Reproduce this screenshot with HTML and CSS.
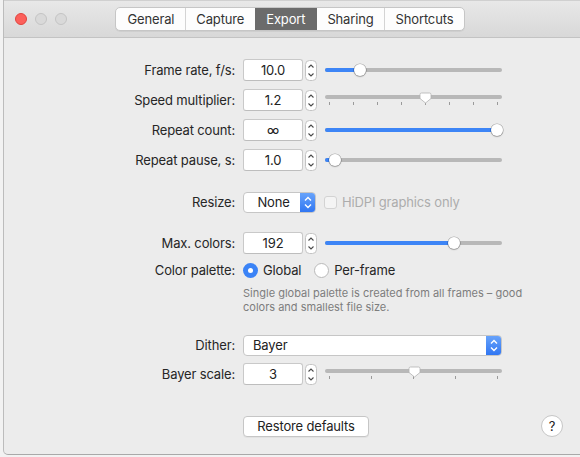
FILE: index.html
```html
<!DOCTYPE html>
<html>
<head>
<meta charset="utf-8">
<link rel="stylesheet" href="styles.css">
</head>
<body>
<div class="window">
  <div class="titlebar">
    <div class="lights">
      <span class="light red"></span>
      <span class="light"></span>
      <span class="light"></span>
    </div>
    <div class="tabs">
      <span class="tab">General</span>
      <span class="tab">Capture</span>
      <span class="tab active">Export</span>
      <span class="tab">Sharing</span>
      <span class="tab">Shortcuts</span>
    </div>
  </div>

  <div class="form">
    <div class="row">
      <label class="label">Frame rate, f/s:</label>
      <div class="ctl">
        <span class="field">10.0</span>
        <svg class="stepper" width="12" height="21" viewBox="0 0 12 21"><rect x="0.5" y="0.5" width="11" height="20" rx="4" fill="#fff" stroke="#c4c4c4"/><polyline points="3.5,7.5 6,5 8.5,7.5" fill="none" stroke="#4a4a4a" stroke-width="1.1"/><polyline points="3.5,13.5 6,16 8.5,13.5" fill="none" stroke="#4a4a4a" stroke-width="1.1"/></svg>
        <div class="slider"><div class="track"><div class="fill" style="width:35px"></div></div><span class="knob" style="left:35px"></span></div>
      </div>
    </div>

    <div class="row gap8">
      <label class="label">Speed multiplier:</label>
      <div class="ctl">
        <span class="field">1.2</span>
        <svg class="stepper" width="12" height="21" viewBox="0 0 12 21"><rect x="0.5" y="0.5" width="11" height="20" rx="4" fill="#fff" stroke="#c4c4c4"/><polyline points="3.5,7.5 6,5 8.5,7.5" fill="none" stroke="#4a4a4a" stroke-width="1.1"/><polyline points="3.5,13.5 6,16 8.5,13.5" fill="none" stroke="#4a4a4a" stroke-width="1.1"/></svg>
        <div class="slider ticked">
          <div class="track"></div>
          <div class="ticks"><i></i><i></i><i></i><i></i><i></i><i></i><i></i><i></i></div>
          <svg class="tknob" style="left:100px" width="13" height="12" viewBox="0 0 13 12"><path d="M1 2.5 Q1 1 2.5 1 H10.5 Q12 1 12 2.5 V6.5 L6.5 11 L1 6.5 Z" fill="#fff" stroke="#b3b3b3" stroke-width="0.8"/></svg>
        </div>
      </div>
    </div>

    <div class="row gap8">
      <label class="label">Repeat count:</label>
      <div class="ctl">
        <span class="field">∞</span>
        <svg class="stepper" width="12" height="21" viewBox="0 0 12 21"><rect x="0.5" y="0.5" width="11" height="20" rx="4" fill="#fff" stroke="#c4c4c4"/><polyline points="3.5,7.5 6,5 8.5,7.5" fill="none" stroke="#4a4a4a" stroke-width="1.1"/><polyline points="3.5,13.5 6,16 8.5,13.5" fill="none" stroke="#4a4a4a" stroke-width="1.1"/></svg>
        <div class="slider"><div class="track"><div class="fill" style="width:173px"></div></div><span class="knob" style="left:172px"></span></div>
      </div>
    </div>

    <div class="row gap8">
      <label class="label">Repeat pause, s:</label>
      <div class="ctl">
        <span class="field">1.0</span>
        <svg class="stepper" width="12" height="21" viewBox="0 0 12 21"><rect x="0.5" y="0.5" width="11" height="20" rx="4" fill="#fff" stroke="#c4c4c4"/><polyline points="3.5,7.5 6,5 8.5,7.5" fill="none" stroke="#4a4a4a" stroke-width="1.1"/><polyline points="3.5,13.5 6,16 8.5,13.5" fill="none" stroke="#4a4a4a" stroke-width="1.1"/></svg>
        <div class="slider"><div class="track"><div class="fill" style="width:10px"></div></div><span class="knob" style="left:10px"></span></div>
      </div>
    </div>

    <div class="row gap20">
      <label class="label">Resize:</label>
      <div class="ctl">
        <div class="popup small">
          <span class="popup-text center">None</span>
          <span class="popup-arrow"><svg width="16" height="21" viewBox="0 0 16 21"><polyline points="5,8.5 8,5.5 11,8.5" fill="none" stroke="#fff" stroke-width="1.4"/><polyline points="5,12.5 8,15.5 11,12.5" fill="none" stroke="#fff" stroke-width="1.4"/></svg></span>
        </div>
        <span class="checkbox"></span>
        <span class="disabled-text">HiDPI graphics only</span>
      </div>
    </div>

    <div class="row gap19">
      <label class="label">Max. colors:</label>
      <div class="ctl">
        <span class="field">192</span>
        <svg class="stepper" width="12" height="21" viewBox="0 0 12 21"><rect x="0.5" y="0.5" width="11" height="20" rx="4" fill="#fff" stroke="#c4c4c4"/><polyline points="3.5,7.5 6,5 8.5,7.5" fill="none" stroke="#4a4a4a" stroke-width="1.1"/><polyline points="3.5,13.5 6,16 8.5,13.5" fill="none" stroke="#4a4a4a" stroke-width="1.1"/></svg>
        <div class="slider"><div class="track"><div class="fill" style="width:129px"></div></div><span class="knob" style="left:129px"></span></div>
      </div>
    </div>

    <div class="row gap5">
      <label class="label">Color palette:</label>
      <div class="ctl">
        <span class="radio on"></span><span class="radio-text">Global</span>
        <span class="radio off"></span><span class="radio-text">Per-frame</span>
      </div>
    </div>

    <div class="row gap5 auto">
      <span></span>
      <p class="hint">Single global palette is created from all frames – good<br>colors and smallest file size.</p>
    </div>

    <div class="row gap20">
      <label class="label">Dither:</label>
      <div class="ctl">
        <div class="popup wide">
          <span class="popup-text">Bayer</span>
          <span class="popup-arrow"><svg width="16" height="21" viewBox="0 0 16 21"><polyline points="5,8.5 8,5.5 11,8.5" fill="none" stroke="#fff" stroke-width="1.4"/><polyline points="5,12.5 8,15.5 11,12.5" fill="none" stroke="#fff" stroke-width="1.4"/></svg></span>
        </div>
      </div>
    </div>

    <div class="row gap7">
      <label class="label">Bayer scale:</label>
      <div class="ctl">
        <span class="field">3</span>
        <svg class="stepper" width="12" height="21" viewBox="0 0 12 21"><rect x="0.5" y="0.5" width="11" height="20" rx="4" fill="#fff" stroke="#c4c4c4"/><polyline points="3.5,7.5 6,5 8.5,7.5" fill="none" stroke="#4a4a4a" stroke-width="1.1"/><polyline points="3.5,13.5 6,16 8.5,13.5" fill="none" stroke="#4a4a4a" stroke-width="1.1"/></svg>
        <div class="slider ticked">
          <div class="track"></div>
          <div class="ticks"><i></i><i></i><i></i><i></i><i></i></div>
          <svg class="tknob" style="left:89px" width="13" height="12" viewBox="0 0 13 12"><path d="M1 2.5 Q1 1 2.5 1 H10.5 Q12 1 12 2.5 V6.5 L6.5 11 L1 6.5 Z" fill="#fff" stroke="#b3b3b3" stroke-width="0.8"/></svg>
        </div>
      </div>
    </div>

    <div class="bottom">
      <button class="btn">Restore defaults</button>
      <button class="help">?</button>
    </div>
  </div>
</div>
</body>
</html>
```

FILE: styles.css
```css
* { box-sizing: border-box; }
html, body {
  margin: 0;
  padding: 0;
}
body {
  width: 580px;
  height: 457px;
  overflow: hidden;
  background: #f2f2f2;
  font-family: Inter, "Noto Sans", "Liberation Sans", sans-serif;
  font-size: 13px;
  letter-spacing: -0.15px;
  color: #262626;
}
.window {
  margin-left: 3px;
  width: 577px;
  height: 455px;
  background: #ececec;
  border-left: 1px solid #bcbcbc;
  border-bottom: 1px solid #a9a9a9;
  border-bottom-left-radius: 5px;
  display: flex;
  flex-direction: column;
  overflow: hidden;
}
.titlebar {
  height: 38px;
  flex: none;
  display: flex;
  align-items: center;
  background: linear-gradient(#e8e8e8, #d8d8d8);
  border-bottom: 1px solid #c3c3c3;
  border-top: 1px solid #d0d0d0;
}
.lights {
  display: flex;
  gap: 8px;
  padding-left: 11px;
}
.light {
  width: 12px;
  height: 12px;
  border-radius: 50%;
  background: #d9d9d9;
  border: 1px solid #c4c4c4;
}
.light.red {
  background: #fc605b;
  border-color: #e0443e;
}
.tabs {
  margin-left: 48px;
  display: flex;
  height: 24px;
  border: 1px solid #c6c6c6;
  border-radius: 5px;
  background: #fdfdfd;
  overflow: hidden;
  box-shadow: 0 1px 0 rgba(0,0,0,0.05);
}
.tab {
  display: flex;
  align-items: center;
  padding: 0 10.5px;
  color: #333;
  border-left: 1px solid #d4d4d4;
}
.tab:first-child { border-left: none; padding-left: 11.5px; }
.tab.active {
  background: #6b6b6b;
  color: #fff;
  border-left-color: #6b6b6b;
}
.tab.active + .tab { border-left-color: #6b6b6b; }

.form {
  padding-top: 21px;
  display: flex;
  flex-direction: column;
}
.row {
  display: grid;
  grid-template-columns: 231px 1fr;
  column-gap: 8px;
  align-items: center;
  height: 22px;
}
.row.auto { height: auto; }
.gap5 { margin-top: 5px; }
.gap7 { margin-top: 7px; }
.gap8 { margin-top: 8px; }
.gap19 { margin-top: 19px; }
.gap20 { margin-top: 20px; }
.label {
  text-align: right;
  white-space: nowrap;
}
.ctl {
  display: flex;
  align-items: center;
  height: 22px;
}
.field {
  width: 60px;
  height: 22px;
  background: #fff;
  border: 1px solid #c9c9c9;
  border-bottom-color: #bdbdbd;
  border-radius: 3px;
  display: flex;
  align-items: center;
  justify-content: center;
  color: #222;
}
.stepper {
  margin-left: 2px;
  flex: none;
}
.slider {
  position: relative;
  margin-left: 8px;
  width: 177px;
  height: 22px;
  display: flex;
  align-items: center;
}
.track {
  flex: 1;
  height: 4px;
  background: #b8b8b8;
  border-radius: 2px;
  overflow: hidden;
}
.fill {
  height: 100%;
  background: #3d85f6;
}
.knob {
  position: absolute;
  top: 50%;
  width: 12px;
  height: 12px;
  margin: -6px 0 0 -6px;
  border-radius: 50%;
  background: #fff;
  box-shadow: 0 0 0 0.6px rgba(0,0,0,0.28), 0 1px 1.5px rgba(0,0,0,0.2);
}
.slider.ticked {
  display: block;
}
.slider.ticked .track {
  position: absolute;
  left: 0;
  right: 0;
  top: 6px;
}
.ticks {
  position: absolute;
  left: 4px;
  right: 4px;
  top: 13px;
  display: flex;
  justify-content: space-between;
}
.ticks i {
  width: 1px;
  height: 3px;
  background: #9a9a9a;
}
.tknob {
  position: absolute;
  top: 3px;
  margin-left: -6.5px;
}
.popup {
  display: flex;
  height: 21px;
  background: #fff;
  border: 1px solid #c6c6c6;
  border-radius: 4px;
  overflow: hidden;
}
.popup.small { width: 73px; }
.popup.wide { width: 259px; }
.popup-text {
  flex: 1;
  display: flex;
  align-items: center;
  padding-left: 9px;
  color: #222;
}
.popup-text.center {
  justify-content: center;
  padding-left: 3px;
}
.popup-arrow {
  width: 16px;
  margin: -1px -1px -1px 0;
  background: linear-gradient(#6aa5fb, #2e74f2);
  display: flex;
  align-items: center;
}
.checkbox {
  margin-left: 8px;
  width: 13px;
  height: 13px;
  border: 1px solid #d3d3d3;
  border-radius: 3px;
  background: #f4f4f4;
}
.disabled-text {
  margin-left: 5px;
  color: #acacac;
}
.radio {
  width: 15px;
  height: 15px;
  border-radius: 50%;
  flex: none;
}
.radio.on {
  background: #3b83f6;
  position: relative;
  display: flex;
  align-items: center;
  justify-content: center;
}
.radio.on::after {
  content: "";
  width: 5px;
  height: 5px;
  border-radius: 50%;
  background: #fff;
}
.radio.off {
  margin-left: 13px;
  background: #fff;
  border: 1px solid #b9b9b9;
}
.radio-text {
  margin-left: 5px;
}
.hint {
  margin: 0;
  font-size: 11px;
  line-height: 14px;
  letter-spacing: 0;
  color: #7d7d7d;
}
.bottom {
  margin-top: 30px;
  display: flex;
  align-items: center;
  height: 22px;
  padding-left: 239px;
  padding-right: 17px;
}
.btn {
  font: inherit;
  letter-spacing: inherit;
  color: #222;
  width: 126px;
  height: 21px;
  padding: 0;
  background: #fff;
  border: 1px solid #c6c6c6;
  border-radius: 4px;
  box-shadow: 0 1px 0 rgba(0,0,0,0.04);
}
.help {
  margin-left: auto;
  width: 22px;
  height: 22px;
  padding: 0;
  border-radius: 50%;
  background: #fff;
  border: 1px solid #c6c6c6;
  font: inherit;
  color: #222;
  display: flex;
  align-items: center;
  justify-content: center;
}
```
